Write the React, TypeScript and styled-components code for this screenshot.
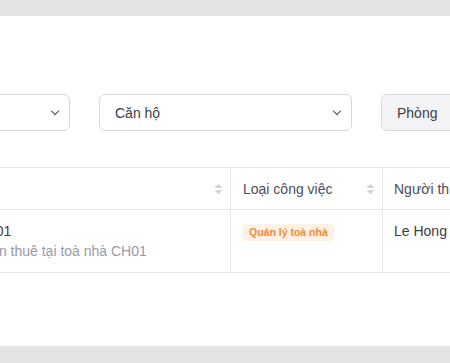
import styled, { createGlobalStyle } from "styled-components"

const GlobalStyle = createGlobalStyle`
  html, body {
    margin: 0;
    padding: 0;
    background: #e4e4e4;
    font-family: "Liberation Sans", Arial, sans-serif;
    overflow: hidden;
  }
`

const Page = styled.div`
  padding: 16px 0 17px;
  width: 450px;
  height: 363px;
  box-sizing: border-box;
`

const Card = styled.div`
  background: #ffffff;
  height: 330px;
  overflow: hidden;
  padding-top: 78px;
  box-sizing: border-box;
`

const FilterRow = styled.div`
  display: flex;
  gap: 29px;
  margin-left: -183px;
  width: 800px;
`

const SelectBox = styled.div<{ $width: number }>`
  width: ${({ $width }) => $width}px;
  height: 37px;
  box-sizing: border-box;
  border: 1px solid #d8d7e0;
  border-radius: 6px;
  display: flex;
  align-items: center;
  justify-content: space-between;
  padding: 0 9px 0 15px;
  font-size: 14px;
  color: #3d3d48;
  background: #fff;
`

const GhostButton = styled.div`
  height: 37px;
  box-sizing: border-box;
  border: 1px solid #d8d7e0;
  border-radius: 6px;
  background: #f4f4f6;
  display: flex;
  align-items: center;
  padding: 0 15px;
  font-size: 14px;
  color: #3d3d48;
  width: 120px;
`

const Chevron = () => (
  <svg width="10" height="6" viewBox="0 0 10 6" fill="none">
    <path d="M1.5 1.2l3.5 3.5 3.5-3.5" stroke="#55555f" strokeWidth="1.2" strokeLinecap="round" strokeLinejoin="round" />
  </svg>
)

const SortIcon = () => (
  <svg width="9" height="12" viewBox="0 0 9 12">
    <path d="M4.5 0.5L8.5 5H0.5z" fill="#d3d3da" />
    <path d="M4.5 11.5L0.5 7H8.5z" fill="#d3d3da" />
  </svg>
)

const Table = styled.div`
  margin-top: 36px;
  margin-left: -120px;
  width: 800px;
  border-top: 1px solid #e6e6ec;
`

const Row = styled.div<{ $header?: boolean }>`
  display: grid;
  grid-template-columns: 350px 152px 1fr;
  height: ${({ $header }) => ($header ? 42 : 63)}px;
  border-bottom: 1px solid #e6e6ec;
  box-sizing: border-box;
`

const HeadCell = styled.div<{ $pad: number; $first?: boolean }>`
  display: flex;
  align-items: center;
  justify-content: space-between;
  padding: 0 7px 0 ${({ $pad }) => $pad}px;
  font-size: 14px;
  color: #4d4d5a;
  border-left: ${({ $first }) => ($first ? "none" : "1px solid #e6e6ec")};
  white-space: nowrap;
  overflow: hidden;
`

const BodyCell = styled.div<{ $pad: number; $first?: boolean }>`
  padding: 11px 12px 0 ${({ $pad }) => $pad}px;
  font-size: 14px;
  line-height: 20px;
  color: #3d3d48;
  border-left: ${({ $first }) => ($first ? "none" : "1px solid #e6e6ec")};
  white-space: nowrap;
  overflow: hidden;
`

const Title = styled.div`
  color: #3d3d48;
`

const Sub = styled.div`
  color: #9a9aa6;
`

const Badge = styled.span`
  display: inline-block;
  margin-top: 2px;
  padding: 0 6px;
  height: 17px;
  line-height: 17px;
  border-radius: 4px;
  background: #fff1e5;
  color: #f5892f;
  font-size: 10.5px;
  font-weight: 700;
`

export default function App() {
  return (
    <>
      <GlobalStyle />
      <Page>
        <Card>
          <FilterRow>
            <SelectBox $width={253}>
              <span>Toà nhà</span>
              <Chevron />
            </SelectBox>
            <SelectBox $width={253}>
              <span>Căn hộ</span>
              <Chevron />
            </SelectBox>
            <GhostButton>Phòng</GhostButton>
          </FilterRow>
          <Table>
            <Row $header>
              <HeadCell $first $pad={59}>
                <span>Tên</span>
                <SortIcon />
              </HeadCell>
              <HeadCell $pad={12}>
                <span>Loại công việc</span>
                <SortIcon />
              </HeadCell>
              <HeadCell $pad={11}>
                <span>Người thực hiện</span>
              </HeadCell>
            </Row>
            <Row>
              <BodyCell $first $pad={59}>
                <Title>Bảo trì M01</Title>
                <Sub>Bảo trì căn thuê tại toà nhà CH01</Sub>
              </BodyCell>
              <BodyCell $pad={12}>
                <Badge>Quản lý toà nhà</Badge>
              </BodyCell>
              <BodyCell $pad={11}>Le Hong Anh</BodyCell>
            </Row>
          </Table>
        </Card>
      </Page>
    </>
  )
}
